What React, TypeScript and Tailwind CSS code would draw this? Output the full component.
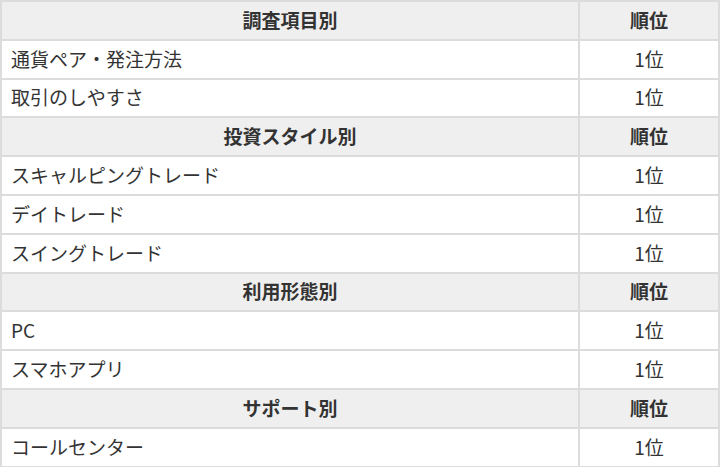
import React from 'react';

type Section = { title: string; items: string[] };

const sections: Section[] = [
  { title: '調査項目別', items: ['通貨ペア・発注方法', '取引のしやすさ'] },
  { title: '投資スタイル別', items: ['スキャルピングトレード', 'デイトレード', 'スイングトレード'] },
  { title: '利用形態別', items: ['PC', 'スマホアプリ'] },
  { title: 'サポート別', items: ['コールセンター'] },
];

const App: React.FC = () => {
  return (
    <div
      className="w-[720px] h-[467px] bg-white text-[#333] overflow-hidden"
      style={{ fontFamily: '"Noto Sans CJK JP", "Noto Sans", sans-serif' }}
    >
      <table className="w-full border-collapse border-2 border-[#dcdcdc] text-[19px] leading-none">
        <tbody>
          {sections.map((s) => (
            <React.Fragment key={s.title}>
              <tr className="bg-[#efefef] h-[38.8px]">
                <th className="border-2 border-[#dcdcdc] font-bold text-center pb-[2px]">{s.title}</th>
                <th className="border-2 border-[#dcdcdc] font-bold text-center pb-[2px] w-[140px]">順位</th>
              </tr>
              {s.items.map((item) => (
                <tr key={item} className="h-[38.8px]">
                  <td className="border-2 border-[#dcdcdc] pl-[9px] pb-[2px] text-left">{item}</td>
                  <td className="border-2 border-[#dcdcdc] pb-[2px] text-center">1位</td>
                </tr>
              ))}
            </React.Fragment>
          ))}
        </tbody>
      </table>
    </div>
  );
};

export default App;
